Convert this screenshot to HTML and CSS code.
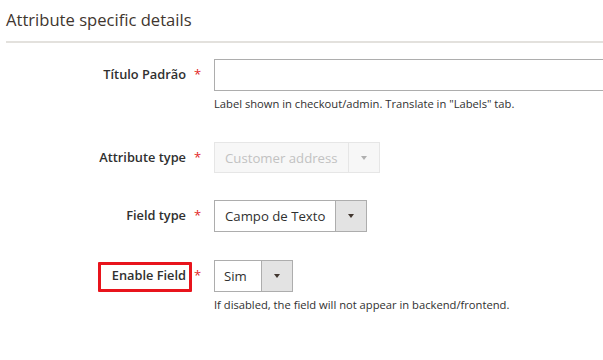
FILE: index.html
```html
<!DOCTYPE html>
<html>
<head>
<meta charset="utf-8">
<link rel="stylesheet" href="styles.css">
</head>
<body>
<div class="section">
  <h2 class="title">Attribute specific details</h2>
  <div class="form">
    <div class="row row-title">
      <div class="label"><span>Título Padrão</span></div>
      <div class="star">*</div>
      <div class="control">
        <div class="input"></div>
        <div class="note">Label shown in checkout/admin. Translate in "Labels" tab.</div>
      </div>
    </div>
    <div class="row row-attr">
      <div class="label"><span>Attribute type</span></div>
      <div class="star">*</div>
      <div class="control">
        <div class="select disabled">
          <span class="value">Customer address</span>
          <span class="btn"><span class="arrow"></span></span>
        </div>
      </div>
    </div>
    <div class="row row-field">
      <div class="label"><span>Field type</span></div>
      <div class="star">*</div>
      <div class="control">
        <div class="select">
          <span class="value">Campo de Texto</span>
          <span class="btn"><span class="arrow"></span></span>
        </div>
      </div>
    </div>
    <div class="row row-enable">
      <div class="label"><span class="highlight">Enable Field</span></div>
      <div class="star">*</div>
      <div class="control">
        <div class="select small">
          <span class="value">Sim</span>
          <span class="btn"><span class="arrow"></span></span>
        </div>
        <div class="note">If disabled, the field will not appear in backend/frontend.</div>
      </div>
    </div>
  </div>
</div>
</body>
</html>
```
FILE: styles.css
```css
* { box-sizing: border-box; }
html, body { margin: 0; padding: 0; background: #fff; }
body {
  font-family: "Open Sans", "Noto Sans", sans-serif;
  color: #303030;
  width: 603px;
  height: 360px;
  overflow: hidden;
}
.section { padding-top: 9px; }
.title {
  margin: 0 0 0 6px;
  font-size: 16.6px;
  font-weight: 400;
  color: #41362f;
  line-height: 22px;
  padding-bottom: 10px;
  border-bottom: 2px solid #e3e1dd;
}
.form { display: flex; flex-direction: column; }
.row { display: flex; align-items: flex-start; }
.row-title { margin-top: 16px; }
.row-attr { margin-top: 31px; }
.row-field { margin-top: 27px; }
.row-enable { margin-top: 28px; }
.label {
  flex: 0 0 186px;
  text-align: right;
  font-size: 12.8px;
  font-weight: 600;
  line-height: 31px;
  color: #303030;
}
.highlight { position: relative; }
.highlight::after {
  content: "";
  position: absolute;
  left: -14px;
  right: -6px;
  top: -4px;
  bottom: -8px;
  border: 3px solid #e8141c;
  border-radius: 1px;
}
.star {
  flex: 0 0 28px;
  padding-left: 8px;
  color: #e22626;
  font-size: 13px;
  line-height: 31px;
}
.control { flex: 1 1 auto; min-width: 0; }
.input {
  height: 32px;
  width: 400px;
  border: 1px solid #adadad;
  border-right: none;
  background: #fff;
}
.note {
  font-size: 11.2px;
  line-height: 14px;
  color: #303030;
  margin-top: 6px;
}
.select {
  display: inline-flex;
  height: 32px;
  border: 1px solid #adadad;
  background: #fff;
  font-size: 13.2px;
}
.select .value {
  padding: 0 10px;
  line-height: 30px;
  color: #303030;
}
.select .btn {
  width: 31px;
  border-left: 1px solid #adadad;
  background: #e3e3e3;
  display: flex;
  align-items: center;
  justify-content: center;
}
.arrow {
  width: 0; height: 0;
  border-left: 3.5px solid transparent;
  border-right: 3.5px solid transparent;
  border-top: 4px solid #41362f;
}
.select.disabled {
  height: 31px;
  border-color: #e6e6e6;
  background: #f7f7f7;
}
.select.disabled .value { color: #c2c2c2; }
.select.disabled .btn { border-left-color: #e6e6e6; background: #f7f7f7; width: 31px; }
.select.disabled .arrow { border-top-color: #b0b0b0; }
.select.small .value { padding: 0 10px 0 9px; width: 46px; }
```
